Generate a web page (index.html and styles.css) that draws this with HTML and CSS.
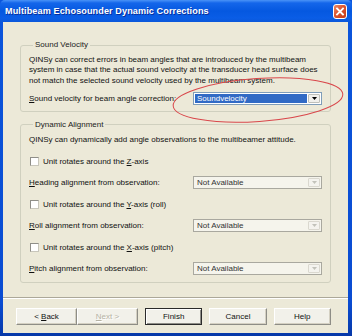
FILE: index.html
```html
<!DOCTYPE html>
<html>
<head>
  <meta charset="UTF-8">
  <link rel="stylesheet" href="styles.css">
</head>
<body>
  <div class="window">
    <div class="titlebar">
      <span class="title">Multibeam Echosounder Dynamic Corrections</span>
      <span class="close">
        <svg width="14" height="15" viewBox="0 0 14 15">
          <path d="M4 4.5 L10 10.5 M10 4.5 L4 10.5" stroke="#fff" stroke-width="1.8" stroke-linecap="square"/>
        </svg>
      </span>
    </div>
    <div class="client">
      <fieldset class="group velocity">
        <legend>Sound Velocity</legend>
        <p class="info">QINSy can correct errors in beam angles that are introduced by the multibeam<br>system in case that the actual sound velocity at the transducer head surface does<br>not match the selected sound velocity used by the multibeam system.</p>
        <div class="row">
          <label><u>S</u>ound velocity for beam angle correction:</label>
          <div class="combo selected">
            <span class="value">Soundvelocity</span>
            <span class="drop"><svg width="5" height="3" viewBox="0 0 5 3"><path d="M0 0 H5 L2.5 3 Z" fill="#000"/></svg></span>
          </div>
        </div>
      </fieldset>

      <fieldset class="group alignment">
        <legend>Dynamic Alignment</legend>
        <div class="rows">
          <div class="row">QINSy can dynamically add angle observations to the multibeamer attitude.</div>
          <div class="row check"><span class="box"></span><span>Unit rotates around the <u>Z</u>-axis</span></div>
          <div class="row">
            <label><u>H</u>eading alignment from observation:</label>
            <div class="combo disabled"><span class="value">Not Available</span><span class="drop"><svg width="5" height="3" viewBox="0 0 5 3"><path d="M0 0 H5 L2.5 3 Z" fill="#C2C2BA"/></svg></span></div>
          </div>
          <div class="row check"><span class="box"></span><span>Unit rotates around the <u>Y</u>-axis (roll)</span></div>
          <div class="row">
            <label><u>R</u>oll alignment from observation:</label>
            <div class="combo disabled"><span class="value">Not Available</span><span class="drop"><svg width="5" height="3" viewBox="0 0 5 3"><path d="M0 0 H5 L2.5 3 Z" fill="#C2C2BA"/></svg></span></div>
          </div>
          <div class="row check"><span class="box"></span><span>Unit rotates around the <u>X</u>-axis (pitch)</span></div>
          <div class="row">
            <label><u>P</u>itch alignment from observation:</label>
            <div class="combo disabled"><span class="value">Not Available</span><span class="drop"><svg width="5" height="3" viewBox="0 0 5 3"><path d="M0 0 H5 L2.5 3 Z" fill="#C2C2BA"/></svg></span></div>
          </div>
        </div>
      </fieldset>

      <div class="separator"></div>

      <div class="buttons">
        <div class="pair">
          <button class="btn">&lt; <u>B</u>ack</button>
          <button class="btn" disabled><u>N</u>ext &gt;</button>
        </div>
        <button class="btn default">Finish</button>
        <button class="btn">Cancel</button>
        <button class="btn">Help</button>
      </div>
    </div>

    <svg class="mark" width="352" height="336" viewBox="0 0 352 336">
      <ellipse cx="258" cy="100" rx="85" ry="21.5" transform="rotate(-4 258 100)" fill="none" stroke="#D9474B" stroke-width="1"/>
    </svg>
  </div>
</body>
</html>
```

FILE: styles.css
```css
body {
  margin: 0;
  padding: 0;
  font-family: "Liberation Sans", Arial, sans-serif;
  font-size: 8px;
  color: #000;
}

.window {
  position: relative;
  width: 352px;
  height: 336px;
  display: flex;
  flex-direction: column;
  background: linear-gradient(#0B55DC, #0A4CD2 90%, #0638A8);
  overflow: hidden;
}

.titlebar {
  height: 22px;
  flex-shrink: 0;
  display: flex;
  align-items: center;
  justify-content: space-between;
  padding: 0 5px 0 5px;
  background: linear-gradient(#4A93F7 0, #1466EA 3px, #0558E0 11px, #0A5DE6 18px, #0B57DA 22px);
  border-radius: 5px 5px 0 0;
}

.title {
  color: #fff;
  font-weight: bold;
  font-size: 9.1px;
  letter-spacing: 0.1px;
  text-shadow: 1px 1px 0 #0A2E9A;
}

.close {
  width: 14px;
  height: 15px;
  margin-top: 1px;
  box-sizing: border-box;
  border: 1px solid #fff;
  border-radius: 3px;
  background: linear-gradient(135deg, #EE8A66, #DC5530 45%, #C53A18);
  display: flex;
}

.close svg {
  margin: -1px;
}

.client {
  flex: 1;
  margin: 0 4px 3px 3px;
  background: #ECE9D8;
  display: flex;
  flex-direction: column;
  padding: 18px 17px 0 17px;
}

.group {
  margin: 0;
  padding: 0 8px;
  border: 1px solid #D0D0BF;
  border-radius: 3px;
}

.group legend {
  margin-left: 4px;
  padding: 0 2px;
  line-height: 10px;
  color: #222;
}

.velocity {
  padding-bottom: 6px;
}

.info {
  margin: 5px 0 0 0;
  line-height: 10.3px;
  color: #111;
}

.row {
  display: flex;
  align-items: center;
  height: 13px;
  color: #111;
  white-space: nowrap;
}

.velocity .row {
  margin-top: 6px;
}

.row label {
  width: 164px;
  flex-shrink: 0;
}

.alignment {
  margin-top: 8px;
  padding-bottom: 7px;
}

.rows {
  display: flex;
  flex-direction: column;
  gap: 8.5px;
  padding-top: 3.5px;
}

.check .box {
  width: 9px;
  height: 9px;
  box-sizing: border-box;
  margin: 0 4px 0 1px;
  background: #fff;
  border: 1px solid #C8C6BB;
  border-top-color: #8F8E88;
  border-left-color: #8F8E88;
}

.combo {
  width: 129px;
  height: 13px;
  box-sizing: border-box;
  display: flex;
  align-items: stretch;
  padding: 1px;
}

.combo .value {
  flex: 1;
  padding-left: 2px;
  display: flex;
  align-items: center;
}

.combo .drop {
  width: 10px;
  display: flex;
  align-items: center;
  justify-content: center;
  border-radius: 1px;
}

.combo.selected {
  background: #fff;
  border: 1px solid #7F9DB9;
}

.combo.selected .value {
  background: #316AC5;
  color: #fff;
  margin-right: 1px;
}

.combo.selected .drop {
  background: #F1F0EC;
  border: 1px solid #BFC0BA;
}

.combo.disabled {
  background: #F5F4EC;
  border: 1px solid #A9A89F;
}

.combo.disabled .value {
  color: #333;
}

.combo.disabled .drop {
  background: #F4F3EE;
  border: 1px solid #DAD8CF;
}

.separator {
  margin-top: 14px;
  margin-left: -17px;
  margin-right: -17px;
  height: 1px;
  background: #ACA899;
  border-bottom: 1px solid #fff;
}

.buttons {
  display: flex;
  gap: 7px;
  margin-top: 9px;
  margin-left: -4px;
}

.pair {
  display: flex;
}

.btn {
  width: 61px;
  height: 17px;
  padding: 0;
  font-family: "Liberation Sans", Arial, sans-serif;
  font-size: 8px;
  color: #111;
  background: #F2F1EA;
  border: 1px solid #FFFFFF;
  border-right-color: #8E8D86;
  border-bottom-color: #8E8D86;
  box-shadow: inset -1px -1px 0 #D4D0C2;
}

.btn:disabled {
  color: #B5B2A4;
  text-shadow: 1px 1px 0 #fff;
}

.btn.default {
  border: 1px solid #2B2B2B;
  box-shadow: inset 1px 1px 0 #fff, inset -1px -1px 0 #8E8D86;
}

.mark {
  position: absolute;
  left: 0;
  top: 0;
  pointer-events: none;
}
```
